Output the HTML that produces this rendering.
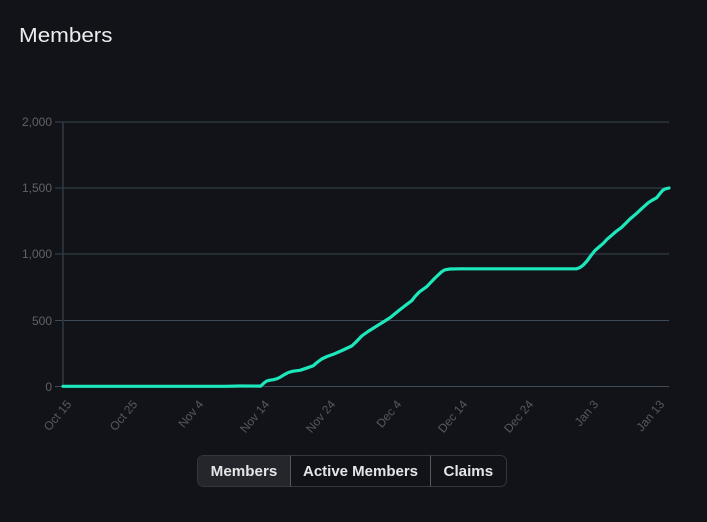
<!DOCTYPE html>
<html>
<head>
<meta charset="utf-8">
<style>
html,body{margin:0;padding:0;width:707px;height:522px;background:#111318;overflow:hidden}
svg{display:block}
text{font-family:"Liberation Sans",sans-serif}
.y{font-size:12px;fill:#5f6267;text-anchor:end}
.x{font-size:12px;fill:#55585d;text-anchor:end}
.b{font-size:14.5px;font-weight:bold;fill:#e4e5e7}
</style>
</head>
<body>
<svg width="707" height="522" viewBox="0 0 707 522" xmlns="http://www.w3.org/2000/svg">
<rect width="707" height="522" fill="#111318"/>
<text x="19" y="42" font-size="20.5" fill="#eceded" textLength="93.5" lengthAdjust="spacingAndGlyphs">Members</text>

<g fill="none">
<path d="M55 122H669M55 188H669M55 254H669" stroke="#2e343c" stroke-width="1.6"/>
<path d="M55 320.5H669M55 386.5H669" stroke="#3f4a58" stroke-width="1"/>
<path d="M63 122V387" stroke="#2f3740" stroke-width="1.6"/>
</g>

<text class="y" x="52" y="126">2,000</text>
<text class="y" x="52" y="192">1,500</text>
<text class="y" x="52" y="258">1,000</text>
<text class="y" x="52" y="325">500</text>
<text class="y" x="52" y="391">0</text>

<g>
<text class="x" transform="translate(72 404.5) rotate(-50)">Oct 15</text>
<text class="x" transform="translate(138 404.5) rotate(-50)">Oct 25</text>
<text class="x" transform="translate(204 404.5) rotate(-50)">Nov 4</text>
<text class="x" transform="translate(270 404.5) rotate(-50)">Nov 14</text>
<text class="x" transform="translate(336 404.5) rotate(-50)">Nov 24</text>
<text class="x" transform="translate(402 404.5) rotate(-50)">Dec 4</text>
<text class="x" transform="translate(468 404.5) rotate(-50)">Dec 14</text>
<text class="x" transform="translate(534 404.5) rotate(-50)">Dec 24</text>
<text class="x" transform="translate(599 404.5) rotate(-50)">Jan 3</text>
<text class="x" transform="translate(665 404.5) rotate(-50)">Jan 13</text>
</g>

<polyline fill="none" stroke="#1ce8bb" stroke-width="3.2" stroke-linejoin="round" stroke-linecap="round" points="63,386.3 225,386.3 240,386 260.7,386.1 264,383 266.7,381 270,380.2 273.3,379.7 277,378.7 280,377.3 284,374.8 288.3,372.5 293,371.2 300,370.3 306,368.3 313.3,365.7 317,362.5 321.7,359 327,356.5 333.3,354.3 342,350.5 351.7,346 356,342 361.7,336 368,331.5 376,326.5 383.3,322 390,317.7 397,312 404,306.5 411.7,300.7 415,296.5 419.3,292 426.7,286.7 434,279 441.7,271.7 445,269.8 450,269 460,268.8 576.7,268.8 580,267.5 583.3,265 587,261 591,255.5 595,250.5 599,247 603.3,243.3 607,239.3 611.7,235.3 616,231.5 621.7,227.3 626,223 630,219 636.7,213.3 642,208.3 648.3,202.7 652,200.3 656.7,197.7 660,193.5 662.7,190.3 665,189 669,188"/>

<rect x="197.5" y="455.5" width="309" height="31" rx="6" fill="#111318" stroke="#33363b"/>
<path d="M290 456H204a6 6 0 0 0-6 6v18a6 6 0 0 0 6 6h86z" fill="#24262b"/>
<path d="M290.5 455.5V486.5M430.5 455.5V486.5" stroke="#55585d" stroke-width="1"/>
<text class="b" x="210.7" y="476" textLength="66.6" lengthAdjust="spacingAndGlyphs">Members</text>
<text class="b" x="303" y="476" textLength="115" lengthAdjust="spacingAndGlyphs">Active Members</text>
<text class="b" x="443.5" y="476" textLength="49.7" lengthAdjust="spacingAndGlyphs">Claims</text>
</svg>
</body>
</html>
